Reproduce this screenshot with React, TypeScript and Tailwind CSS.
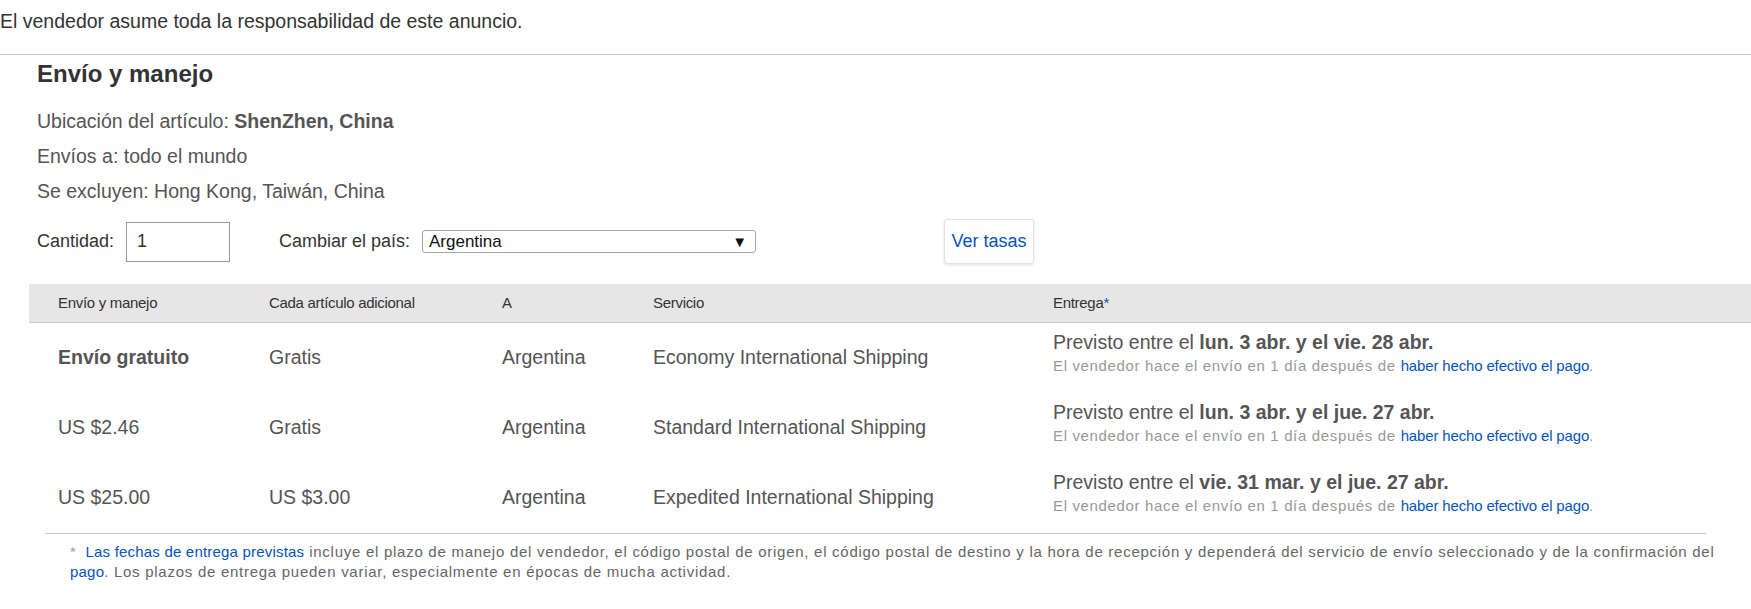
import React from "react";

type Row = {
  cost: string;
  costBold?: boolean;
  extra: string;
  to: string;
  service: string;
  from: string;
  until: string;
};

const rows: Row[] = [
  {
    cost: "Envío gratuito",
    costBold: true,
    extra: "Gratis",
    to: "Argentina",
    service: "Economy International Shipping",
    from: "lun. 3 abr.",
    until: "vie. 28 abr.",
  },
  {
    cost: "US $2.46",
    extra: "Gratis",
    to: "Argentina",
    service: "Standard International Shipping",
    from: "lun. 3 abr.",
    until: "jue. 27 abr.",
  },
  {
    cost: "US $25.00",
    extra: "US $3.00",
    to: "Argentina",
    service: "Expedited International Shipping",
    from: "vie. 31 mar.",
    until: "jue. 27 abr.",
  },
];

const cols = "grid grid-cols-[211px_233px_151px_400px_1fr]";

export default function App() {
  return (
    <div className="min-h-screen w-full bg-white font-['Liberation_Sans',Arial,sans-serif] text-[#333]">
      <p className="pt-[9px] text-[19.5px] leading-6 text-[#333]">
        El vendedor asume toda la responsabilidad de este anuncio.
      </p>
      <div className="mt-[21px] border-t border-[#cccccc]" />

      <section>
        <div className="pl-[37px]">
          <h2 className="mt-[5px] text-[24px] font-bold leading-7 text-[#333]">
            Envío y manejo
          </h2>
          <div className="mt-4 text-[19.5px] leading-[35px] text-[#555]">
            <div>
              Ubicación del artículo:{" "}
              <span className="font-bold">ShenZhen, China</span>
            </div>
            <div>Envíos a: todo el mundo</div>
            <div>Se excluyen: Hong Kong, Taiwán, China</div>
          </div>

          <div className="mt-[9px] flex h-[47px] items-center text-[18px] text-[#333]">
            <label className="w-[89px]">Cantidad:</label>
            <div className="box-border flex h-10 w-[104px] items-start border border-[#999] bg-white pl-[10px] pt-[6px] text-[18px] leading-6 text-[#333]">
              1
            </div>
            <label className="ml-[49px] w-[143px]">Cambiar el país:</label>
            <div className="box-border flex h-[23px] w-[334px] items-center justify-between rounded-[3px] border border-[#a6a6a6] bg-white pl-[6px] pr-[8px] text-[17px] text-[#111]">
              <span>Argentina</span>
              <span className="text-[15px] leading-none text-[#111]">▼</span>
            </div>
            <button className="ml-[188px] flex h-[45px] w-[90px] items-center justify-center rounded-[3px] border border-[#e2e2e2] bg-white text-[18px] text-[#0654ba] shadow-[0_1px_3px_rgba(0,0,0,0.12)]">
              Ver tasas
            </button>
          </div>
        </div>

        <div className="ml-[29px] mt-[19px]">
          <div
            className={`${cols} h-[39px] items-center border-b border-[#c8c8c8] bg-[#e6e6e6] text-[15px] tracking-[-0.3px] text-[#333]`}
          >
            <div className="pl-[29px]">Envío y manejo</div>
            <div className="pl-[29px]">Cada artículo adicional</div>
            <div className="pl-[29px]">A</div>
            <div className="pl-[29px]">Servicio</div>
            <div className="pl-[29px]">
              Entrega<span className="text-[#0654ba]">*</span>
            </div>
          </div>

          {rows.map((r) => (
            <div
              key={r.service}
              className={`${cols} h-[70px] text-[19.5px] text-[#555]`}
            >
              <div className={`self-center pl-[29px] ${r.costBold ? "font-bold" : ""}`}>
                {r.cost}
              </div>
              <div className="self-center pl-[29px]">{r.extra}</div>
              <div className="self-center pl-[29px]">{r.to}</div>
              <div className="self-center pl-[29px]">{r.service}</div>
              <div className="pl-[29px] pt-[7px]">
                <div className="leading-6 text-[#555]">
                  Previsto entre el{" "}
                  <span className="font-bold">
                    {r.from} y el {r.until}
                  </span>
                </div>
                <div className="text-[15px] leading-6 text-[#999]">
                  <span className="tracking-[0.65px]">
                    El vendedor hace el envío en 1 día después de{" "}
                  </span>
                  <a className="tracking-[-0.15px] text-[#0654ba]" href="#">
                    haber hecho efectivo el pago
                  </a>
                  .
                </div>
              </div>
            </div>
          ))}

          <div className="ml-[16px] mr-[45px] border-t border-[#c8c8c8]" />

          <p className="mt-[8px] w-[1696px] pl-[41px] text-[15px] leading-5 tracking-[0.73px] text-[#666]">
            <span className="mr-[4px] text-[#999]">*</span>{" "}
            <a className="text-[#0654ba] tracking-[0.2px]" href="#">
              Las fechas de entrega previstas
            </a>{" "}
            incluye el plazo de manejo del vendedor, el código postal de origen,
            el código postal de destino y la hora de recepción y dependerá del
            servicio de envío seleccionado y de la confirmación del{" "}
            <a className="text-[#0654ba] tracking-[0.2px]" href="#">
              pago
            </a>
            . Los plazos de entrega pueden variar, especialmente en épocas de
            mucha actividad.
          </p>
        </div>
      </section>
    </div>
  );
}
